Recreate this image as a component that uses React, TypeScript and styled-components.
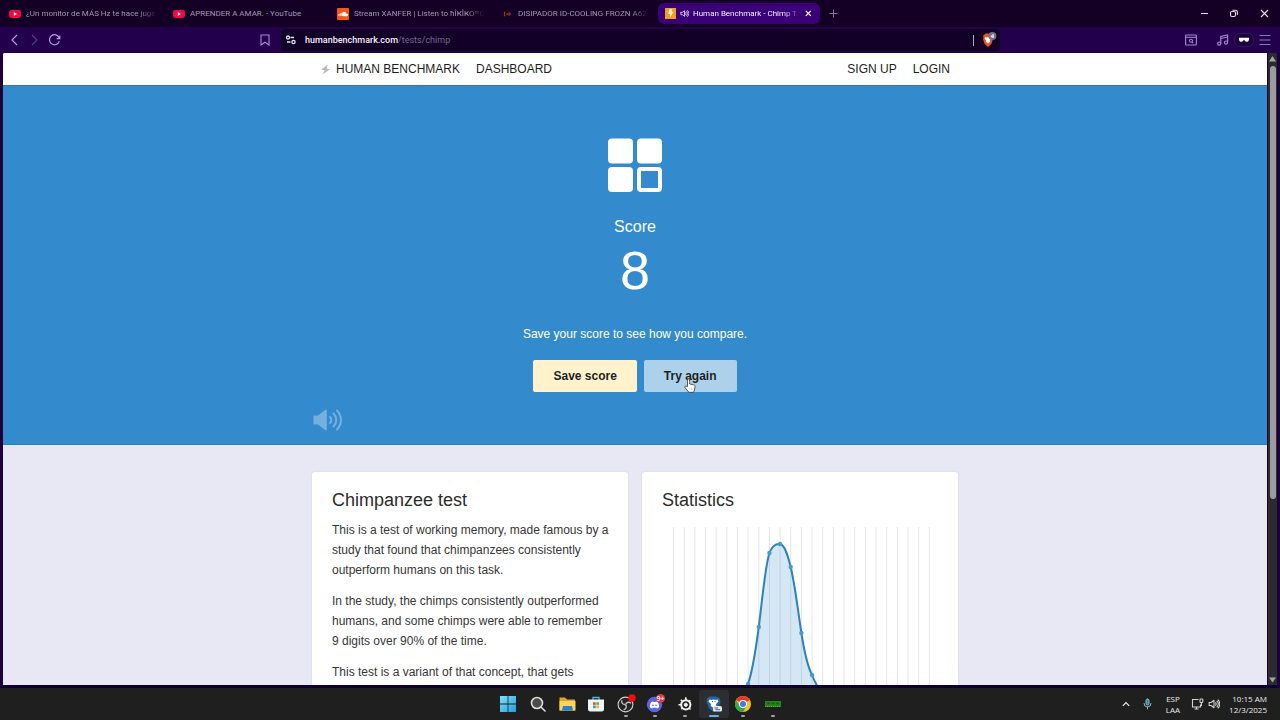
import React from "react";
import styled, { createGlobalStyle } from "styled-components";
import { FaSoundcloud, FaDiscord } from "react-icons/fa";

const GlobalStyle = createGlobalStyle`
  *, *::before, *::after { box-sizing: border-box; }
  body { margin: 0; background: #14002a; font-family: "Liberation Sans", Arial, sans-serif; }
  button, input { font: inherit; }
  svg { display: block; flex: none; }
`;

const uiFont = `"Open Sans", "Noto Sans", sans-serif`;
const chromeFont = `Roboto, "Noto Sans", sans-serif`;

const Desktop = styled.div`
  display: flex;
  flex-direction: column;
  height: 100vh;
  overflow: hidden;
`;

/* Browser chrome */

const TabStrip = styled.header`
  display: flex;
  align-items: center;
  height: 27px;
  padding: 0 10px 0 2px;
  background: #150025;
  font-family: ${chromeFont};
`;

const TabList = styled.nav`
  display: flex;
  gap: 2px;
  min-width: 0;
`;

const Tab = styled.a<{ $active?: boolean }>`
  display: flex;
  align-items: center;
  gap: ${(p) => (p.$active ? "4px" : "5px")};
  flex: 0 1 162px;
  width: 162px;
  min-width: 0;
  height: 21px;
  padding: 0 7px;
  border-radius: 6px;
  font-size: 8px;
  text-decoration: none;
  color: ${(p) => (p.$active ? "#f3ecff" : "#a395b4")};
  background: ${(p) => (p.$active ? "#3a0078" : "transparent")};
`;

const TabTitle = styled.span<{ $fade?: boolean }>`
  flex: 1;
  min-width: 0;
  overflow: hidden;
  line-height: 12px;
  white-space: nowrap;
  mask-image: ${(p) =>
    p.$fade ? "linear-gradient(to right, #000 calc(100% - 18px), transparent)" : "none"};
`;

const IconButton = styled.button`
  display: flex;
  align-items: center;
  justify-content: center;
  padding: 0;
  border: 0;
  background: none;
  color: inherit;
`;

const NewTab = styled(IconButton)`
  margin-left: 9px;
  color: #84759a;
`;

const WindowButtons = styled.div`
  display: flex;
  gap: 20px;
  margin-left: auto;
  color: #e3dcea;
`;

const Toolbar = styled.div`
  display: flex;
  align-items: center;
  height: 26px;
  padding: 0 9px;
  background: #22004b;
  color: #b69be0;
`;

const NavButtons = styled.div`
  display: flex;
  gap: 8px;
  flex: 1 1 251px;
`;

const BookmarkSlot = styled.div`
  width: 21px;
`;

const AddressBar = styled.div`
  display: flex;
  align-items: center;
  flex: 1 1 719px;
  max-width: 719px;
  height: 22px;
  padding: 0 3px 0 4px;
  border-radius: 4px;
  background: #120026;
  color: #e8def5;
`;

const Url = styled.a`
  flex: 1;
  margin-left: 8px;
  font-family: ${chromeFont};
  font-size: 9px;
  font-weight: 500;
  color: #f3ecfb;
  text-decoration: none;

  span { font-weight: 400; color: #786890; }
`;

const Divider = styled.span`
  width: 1px;
  height: 11px;
  margin-right: 7px;
  background: #b0a6bc;
`;

const ToolbarEnd = styled.div`
  display: flex;
  align-items: center;
  justify-content: flex-end;
  flex: 1 1 271px;
  gap: 5px;
`;

const PrivateBadge = styled.span`
  display: flex;
  align-items: center;
  justify-content: center;
  width: 20px;
  height: 14px;
  border: 1px solid #321660;
  border-radius: 6px;
  background: #1c0040;
  color: #ffffff;
`;

const PageGap = styled.div`
  margin-right: 15px;
`;

/* Web page */

const Viewport = styled.div`
  display: flex;
  flex: 1;
  min-height: 0;
  padding: 0 3px;
  border-bottom: 3px solid #0d0030;
  background: #1b003a;
`;

const Page = styled.div`
  flex: 1;
  min-width: 0;
  overflow: hidden;
  border-radius: 2px 0 0 0;
  background: #e7e8f4;
`;

const Container = styled.div`
  width: 100%;
  max-width: 646px;
  margin: 0 auto;
`;

const SiteNav = styled.nav`
  display: flex;
  align-items: center;
  height: 32px;
  background: #ffffff;
`;

const NavRow = styled(Container)`
  display: flex;
  align-items: center;
  gap: 16px;
  padding: 0 8px;

  a {
    display: flex;
    align-items: center;
    gap: 5px;
    font-size: 12px;
    color: #1e1e1e;
    text-decoration: none;
  }
  a:nth-child(3) { margin-left: auto; }
`;

const Hero = styled.section`
  border-top: 1px solid #2d79b0;
  border-bottom: 1px solid #2f7fb9;
  background: #338bce;
  color: #ffffff;
`;

const HeroInner = styled(Container)`
  display: flex;
  flex-direction: column;
  align-items: center;
  height: 358px;
  padding-top: 52px;
  text-align: center;
`;

const Label = styled.h2`
  margin: 25px 0 0;
  font-size: 16px;
  line-height: 20px;
  font-weight: 400;
`;

const Score = styled.h1`
  margin: 3px 0 0;
  font-size: 54px;
  line-height: 60px;
  font-weight: 400;
`;

const Hint = styled.p`
  margin: 24px 0 0;
  font-size: 12px;
  line-height: 20px;
`;

const Actions = styled.div`
  display: flex;
  gap: 7px;
  margin-top: 16px;
`;

const ActionButton = styled.button<{ $tone: string }>`
  position: relative;
  height: 32px;
  padding: 0 20px;
  border: 0;
  border-radius: 2px;
  background: ${(p) => p.$tone};
  color: #1f1f1f;
  font-size: 12px;
  font-weight: 700;
`;

const Pointer = styled.svg`
  position: absolute;
  left: 40px;
  top: 18px;
`;

const SoundButton = styled(IconButton)`
  align-self: flex-start;
  margin-top: 16px;
  color: #75b0de;
`;

const Cards = styled(Container)`
  display: grid;
  grid-template-columns: 1fr 1fr;
  gap: 14px;
  padding-top: 27px;
`;

const Card = styled.article`
  padding: 16px 18px 16px 20px;
  border-radius: 3px;
  background: #ffffff;
  box-shadow: 0 0 2px rgba(90, 90, 140, 0.18);

  h2 {
    margin: 0 0 8px;
    font-size: 18px;
    line-height: 24px;
    font-weight: 400;
    color: #2c2c2c;
  }
  p {
    margin: 0 0 11px;
    font-size: 12px;
    line-height: 20px;
    color: #363636;
  }
`;

const ScrollTrack = styled.div`
  display: flex;
  flex-direction: column;
  align-items: center;
  width: 9px;
  margin-left: 1px;
  padding: 3px 0 2px;
  background: #2b2a2c;
`;

const ScrollThumb = styled.div`
  flex: 0 0 69%;
  width: 6px;
  margin: 4px 0 auto;
  border-radius: 3px;
  background: #9c9a9c;
`;

/* Taskbar */

const Taskbar = styled.footer`
  display: grid;
  grid-template-columns: 1fr auto 1fr;
  align-items: center;
  height: 32px;
  padding: 0 13px 0 14px;
  background: #1f1f20;
  color: #ececec;
  font-family: ${uiFont};
  font-size: 8px;
`;

const AppList = styled.div`
  display: flex;
  grid-column: 2;
  width: 294px;
`;

const AppButton = styled(IconButton)<{ $running?: boolean; $active?: boolean }>`
  position: relative;
  flex: 1;
  height: 28px;
  border-radius: 3px;
  background: ${(p) => (p.$active ? "#2d2e31" : "transparent")};

  &::after {
    content: "";
    position: absolute;
    bottom: 1px;
    width: ${(p) => (p.$active ? "10px" : p.$running ? "4px" : "0")};
    height: 2px;
    border-radius: 1px;
    background: ${(p) => (p.$active ? "#5db2ee" : "#a2a2a2")};
  }
`;

const Tray = styled.div`
  display: flex;
  align-items: center;
  justify-content: flex-end;
  gap: 4px;
`;

const TrayText = styled.div<{ $right?: boolean }>`
  line-height: 11px;
  text-align: ${(p) => (p.$right ? "right" : "center")};
  margin: ${(p) => (p.$right ? "0 0 0 5px" : "0 7px 0 10px")};
`;

const TrayGap = styled.div`
  margin-right: 9px;
`;

const YouTubeIcon = () => (
  <svg width="12" height="12" viewBox="0 0 12 12">
    <rect x="0" y="2" width="12" height="8" rx="2.4" fill="#ed0a45" />
    <path d="M4.8 4.2v3.6L8 6z" fill="#fff" />
  </svg>
);

const SoundcloudIcon = () => (
  <svg width="12" height="12" viewBox="0 0 12 12">
    <rect width="12" height="12" rx="1" fill="#f0561d" />
    <FaSoundcloud x="1" y="1" size={10} color="#fff" />
  </svg>
);

const StoreIcon = () => (
  <svg width="12" height="12" viewBox="0 0 12 12">
    <path d="M3.6 3.8v4.4M5.6 6h2M7.8 4.4L9.3 6 7.8 7.6" fill="none" stroke="#a82c1c" strokeWidth="1.3" />
  </svg>
);

const BenchIcon = () => (
  <svg width="11" height="11" viewBox="0 0 11 11">
    <rect width="11" height="11" fill="#f0a125" />
    <path d="M4.4 1h2.8l-.5 2.8h1.7L4.9 10l.4-4H3.2z" fill="#fff3d2" />
  </svg>
);

const Speaker = ({ size, color = "currentColor" }: { size: number; color?: string }) => (
  <svg width={size} height={size} viewBox="0 0 16 16" fill="none" stroke={color} strokeWidth="1.4" strokeLinecap="round" strokeLinejoin="round">
    <path d="M1.5 6v4h2.6L8 13V3L4.1 6zM10.2 6.2a3 3 0 0 1 0 3.6M12 4.2a5.6 5.6 0 0 1 0 7.6M13.6 2.6a8 8 0 0 1 0 10.8" />
  </svg>
);

const BraveIcon = () => (
  <svg width="16" height="16" viewBox="0 0 16 16">
    <path d="M3 3l1.5-1.4h5L11 3l1 .8-.5 2.2.4 1.5-1.6 4.6L7 15l-3.3-2.9L2.1 7.5l.4-1.5L2 3.8z" fill="#ed5027" />
    <path d="M4 5l2 .6 1-.5 1 .5 2-.6.4 1.5-1.7 2.1.3 1.5L7 11.5 5 10.1l.3-1.5-1.7-2.1z" fill="#fff" />
    <circle cx="11.4" cy="4" r="4" fill="#77718a" />
    <path d="M12.1 6V2.3L10 4.8h2.9" fill="none" stroke="#fff" strokeWidth=".9" />
  </svg>
);

const xs = Array.from({ length: 25 }, (_, i) => 11.5 + i * 10.66);
const points = [
  [86, 164], [96.8, 107], [107.4, 33], [118, 24], [128.7, 47], [139.4, 113], [150, 155],
];
const curve =
  "M75 178C80 178 83 172 86 164C91 150 94 128 96.8 107C100 82 103 47 107.4 33C110 26 113 23.5 118 24C123 25 126 36 128.7 47C133 65 136 91 139.4 113C142 130 146 147 150 155C154 165 159 174 166 178";

const DistributionChart = () => (
  <svg width="100%" viewBox="0 0 278 200" role="img" aria-label="Score distribution">
    <g stroke="#e6e6e8" strokeWidth="1">
      {xs.map((x) => <path key={x} d={`M${x} 7V180`} />)}
    </g>
    <path d={`${curve}V180H75z`} fill="#2b87c8" fillOpacity=".2" />
    <path d={curve} fill="none" stroke="#2b83bd" strokeWidth="2" />
    {points.map(([x, y]) => <circle key={x} cx={x} cy={y} r="2.2" fill="#4a9ad0" />)}
  </svg>
);

const tabs = [
  { icon: <YouTubeIcon />, title: "¿Un monitor de MÁS Hz te hace juge", fade: true },
  { icon: <YouTubeIcon />, title: "APRENDER A AMAR. - YouTube" },
  { icon: <SoundcloudIcon />, title: "Stream XANFER | Listen to ħÎҜÎҜOᵐO", fade: true },
  { icon: <StoreIcon />, title: "DISIPADOR ID-COOLING FROZN A62", fade: true },
];

const apps = [
  {
    name: "Start",
    icon: (
      <svg width="16" height="16" viewBox="0 0 16 16">
        <defs>
          <linearGradient id="win" x1="0" y1="0" x2="1" y2="1">
            <stop stopColor="#7fe0fb" /><stop offset="1" stopColor="#229ee0" />
          </linearGradient>
        </defs>
        <path d="M0 0h7.6v7.6H0zM8.4 0H16v7.6H8.4zM0 8.4h7.6V16H0zM8.4 8.4H16V16H8.4z" fill="url(#win)" />
      </svg>
    ),
  },
  {
    name: "Search",
    icon: (
      <svg width="16" height="16" viewBox="0 0 16 16" fill="#4a4b4d" stroke="#dedede" strokeWidth="1.6" strokeLinecap="round">
        <circle cx="7" cy="7" r="5.5" /><path d="M11.2 11.2L15 15" />
      </svg>
    ),
  },
  {
    name: "File Explorer",
    icon: (
      <svg width="17" height="16" viewBox="0 0 17 16">
        <path d="M.5 1.5h5.5l2 2h8v11H.5z" fill="#e3a32b" />
        <path d="M.5 5h16v9.5H.5z" fill="#fbd45b" />
        <path d="M4 10h9l1 4.5H3z" fill="#2483cf" />
      </svg>
    ),
  },
  {
    name: "Store",
    icon: (
      <svg width="16" height="16" viewBox="0 0 16 16">
        <path d="M5 4V1.5h6V4" fill="none" stroke="#3fb5ea" strokeWidth="1.3" />
        <path d="M0 3.5h16V13a2.5 2.5 0 0 1-2.5 2.5h-11A2.5 2.5 0 0 1 0 13z" fill="#eef3f6" />
        <path d="M5 6.2h2.7v2.7H5z" fill="#e5532d" /><path d="M8.3 6.2H11v2.7H8.3z" fill="#72ae2c" />
        <path d="M5 9.5h2.7v2.7H5z" fill="#2e9be2" /><path d="M8.3 9.5H11v2.7H8.3z" fill="#f3b526" />
      </svg>
    ),
  },
  {
    name: "OBS Studio",
    running: true,
    icon: (
      <svg width="20" height="20" viewBox="0 0 20 20">
        <circle cx="9.5" cy="10.5" r="7.4" fill="#242325" stroke="#d1d1d1" strokeWidth="1.1" />
        <g fill="none" stroke="#bdbdbd" strokeWidth="1.4">
          <path d="M9.5 10.5c-3 .2-4.3-1.8-3.7-4.2" />
          <path d="M9.5 10.5c1.3-2.7 3.7-2.9 5.5-1.3" />
          <path d="M9.5 10.5c1.7 2.5.6 4.6-1.8 5.3" />
        </g>
        <circle cx="16" cy="4" r="3.8" fill="#f40b0b" />
      </svg>
    ),
  },
  {
    name: "Discord",
    running: true,
    icon: (
      <svg width="20" height="20" viewBox="0 0 20 20">
        <circle cx="9.5" cy="10.5" r="7.7" fill="#5b65e5" />
        <FaDiscord x="4.5" y="6" size={10} color="#fff" />
        <circle cx="15.6" cy="4.4" r="4.4" fill="#d83d4d" />
        <text x="15.6" y="6.9" fontSize="7" fontWeight="600" textAnchor="middle" fill="#fff">9+</text>
      </svg>
    ),
  },
  {
    name: "SteelSeries GG",
    running: true,
    icon: (
      <svg width="16" height="16" viewBox="0 0 16 16" fill="none" stroke="#f2f2f2">
        <circle cx="8.8" cy="8.8" r="4.6" strokeWidth="2" />
        <circle cx="8.8" cy="8.8" r="1.6" fill="#f2f2f2" />
        <path d="M8.8 4V1.2M4.5 8.8H1.5" strokeWidth="1.6" />
        <path d="M5.3 5.3L3.8 3.8M12.3 5.3l1-1M5.3 12.3l-1 1M12.3 12.3l1.2 1.2" strokeWidth="1.5" />
      </svg>
    ),
  },
  {
    name: "Brave",
    running: true,
    active: true,
    icon: (
      <svg width="16" height="16" viewBox="0 0 16 16">
        <path d="M1 2.5L3.5.5h7L14 2.5l.5 4-3 7-4 2.5-4.5-3.5L.5 5.5z" fill="#2465a1" />
        <path d="M3.5 3.5l2.5.4 1.5-.6 1.5.6 2.5-.4 1 2-2.5 2.5.3 2-2.8 2-2.8-2 .3-2L2.5 5.5z" fill="#fff" />
        <path d="M6 5.5h1M8.5 5.5h1" stroke="#2465a1" />
        <rect x="7" y="10" width="9" height="5.5" rx="1.5" fill="#dfe7ef" />
        <path d="M8.5 12h3.5M9.5 13.7h4.5" stroke="#3a566e" strokeWidth=".9" />
      </svg>
    ),
  },
  {
    name: "Chrome",
    running: true,
    icon: (
      <svg width="16" height="16" viewBox="0 0 16 16">
        <circle cx="8" cy="8" r="8" fill="#fbc116" />
        <path d="M8 8L1.1 4A8 8 0 0 1 14.9 4z" fill="#e33b2e" />
        <path d="M8 8L4.5 10 1.1 4A8 8 0 0 0 8 16l3.5-6z" fill="#2da94f" />
        <circle cx="8" cy="8" r="4" fill="#fff" /><circle cx="8" cy="8" r="3" fill="#3b7de9" />
      </svg>
    ),
  },
  {
    name: "Memory monitor",
    running: true,
    icon: (
      <svg width="16" height="16" viewBox="0 0 16 16">
        <rect x="0" y="5" width="16" height="6" fill="#25851d" />
        <path d="M0 10.5h16" stroke="#67a94c" strokeDasharray="1 1" />
        <path d="M2 7.5h3M6.5 7.5h3M11 7.5h3" stroke="#1a5a12" strokeWidth="1.5" />
      </svg>
    ),
  },
];

export default function App() {
  return (
    <Desktop>
      <GlobalStyle />
      <TabStrip>
        <TabList>
          {tabs.map((t) => (
            <Tab href="#" key={t.title}>
              {t.icon}
              <TabTitle $fade={t.fade}>{t.title}</TabTitle>
            </Tab>
          ))}
          <Tab href="#" $active>
            <BenchIcon />
            <Speaker size={9} />
            <TabTitle $fade>Human Benchmark - Chimp T</TabTitle>
            <svg width="8" height="7" viewBox="0 0 8 7" stroke="#fff" strokeWidth="1.2"><path d="M.8.8l5 5M5.8.8l-5 5" /></svg>
          </Tab>
        </TabList>
        <NewTab aria-label="New tab">
          <svg width="9" height="9" viewBox="0 0 9 9" stroke="currentColor"><path d="M4.5.5v8M.5 4.5h8" /></svg>
        </NewTab>
        <WindowButtons>
          <IconButton aria-label="Minimize">
            <svg width="9" height="9" viewBox="0 0 9 9" stroke="currentColor"><path d="M1 4.5h7" /></svg>
          </IconButton>
          <IconButton aria-label="Restore">
            <svg width="10" height="9" viewBox="0 0 10 9" fill="none" stroke="currentColor" strokeWidth="1.1">
              <rect x="1.5" y="2.5" width="5" height="5" rx="1.5" /><path d="M3.5 1.2h3A1.8 1.8 0 0 1 8.3 3v3" />
            </svg>
          </IconButton>
          <IconButton aria-label="Close">
            <svg width="11" height="9" viewBox="0 0 11 9" stroke="currentColor" strokeWidth="1.1"><path d="M2 1l7 7M9 1L2 8" /></svg>
          </IconButton>
        </WindowButtons>
      </TabStrip>

      <Toolbar>
        <NavButtons>
          <IconButton aria-label="Back">
            <svg width="12" height="12" viewBox="0 0 12 12" fill="none" stroke="#b69be0" strokeWidth="1.2"><path d="M8 1L3 6l5 5" /></svg>
          </IconButton>
          <IconButton aria-label="Forward">
            <svg width="12" height="12" viewBox="0 0 12 12" fill="none" stroke="#553a80" strokeWidth="1.2"><path d="M3 1l5 5-5 5" /></svg>
          </IconButton>
          <IconButton aria-label="Reload">
            <svg width="12" height="12" viewBox="0 0 12 12" fill="none" stroke="#b69be0" strokeWidth="1.2"><path d="M10.3 7.2A5 5 0 1 1 10.2 4M10.8 1.5V4.6H7.6" /></svg>
          </IconButton>
        </NavButtons>
        <BookmarkSlot>
          <IconButton aria-label="Bookmark">
            <svg width="10" height="12" viewBox="0 0 10 12" fill="none" stroke="#a68cd0" strokeWidth="1.1"><path d="M1 1h8v10L5 8.2 1 11z" /></svg>
          </IconButton>
        </BookmarkSlot>
        <AddressBar>
          <svg width="12" height="10" viewBox="0 0 12 10" fill="none" stroke="currentColor" strokeWidth="1.3">
            <circle cx="3" cy="2.5" r="1.5" /><path d="M5.5 2.5h3.5M2 7h3.5" /><circle cx="8.5" cy="7" r="1.6" />
          </svg>
          <Url href="#">humanbenchmark.com<span>/tests/chimp</span></Url>
          <Divider />
          <BraveIcon />
        </AddressBar>
        <ToolbarEnd>
          <PageGap>
            <svg width="12" height="12" viewBox="0 0 12 12" fill="none" stroke="#a085d0" strokeWidth="1.1">
              <rect x=".6" y="1" width="10.8" height="10" rx=".8" /><path d="M.6 3.3h10.8" /><circle cx="6" cy="6.8" r="1.5" /><path d="M7 8l1 1" />
            </svg>
          </PageGap>
          <svg width="12" height="12" viewBox="0 0 12 12" fill="none" stroke="#a085d0" strokeWidth="1.2">
            <circle cx="2.2" cy="9.6" r="1.6" /><circle cx="9" cy="8.6" r="1.6" /><path d="M3.8 9.6V2.5L10.6 1v7.6M3.8 4.5L10.6 3" />
          </svg>
          <PrivateBadge>
            <svg width="10" height="6" viewBox="0 0 10 6" fill="currentColor"><path d="M0 .8h10v1.4c0 1.5-.8 2.6-2.3 2.6S5.5 3.6 5 2.6C4.5 3.6 3.8 4.8 2.3 4.8S0 3.7 0 2.2z" /></svg>
          </PrivateBadge>
          <IconButton aria-label="Menu">
            <svg width="12" height="12" viewBox="0 0 12 12" stroke="#8d74c0" strokeWidth="1.2"><path d="M.5 1.5h11M.5 6h11M.5 10.5h11" /></svg>
          </IconButton>
        </ToolbarEnd>
      </Toolbar>

      <Viewport>
        <Page>
          <SiteNav>
            <NavRow>
              <a href="#">
                <svg width="11" height="11" viewBox="0 0 11 11" fill="#b9b9b9"><path d="M8 .5L1 5.6l3.6.6L2.5 10.5 10 5.2l-3.6-.7z" /></svg>
                HUMAN BENCHMARK
              </a>
              <a href="#">DASHBOARD</a>
              <a href="#">SIGN UP</a>
              <a href="#">LOGIN</a>
            </NavRow>
          </SiteNav>
          <Hero>
            <HeroInner>
              <svg width="54" height="54" viewBox="0 0 54 54" fill="#fff">
                <rect y=".5" width="25" height="25" rx="4" />
                <rect x="29" y=".5" width="25" height="25" rx="4" />
                <rect y="29" width="25" height="25" rx="4" />
                <rect x="31" y="31" width="21" height="21" rx="2" fill="none" stroke="#fff" strokeWidth="4" />
              </svg>
              <Label>Score</Label>
              <Score>8</Score>
              <Hint>Save your score to see how you compare.</Hint>
              <Actions>
                <ActionButton $tone="#fff2cc">Save score</ActionButton>
                <ActionButton $tone="#aed1eb">
                  Try again
                  <Pointer width="12" height="15" viewBox="0 0 12 15">
                    <path d="M3.5 8.5V2a1.1 1.1 0 0 1 2.2 0v4l4 .8c1 .2 1.4.8 1.3 1.7l-.5 3.5-1 2.3H4.9L1 9.6c-.6-1 .3-1.8 1.2-1.3z" fill="#fff" stroke="#333" strokeWidth=".8" />
                    <path d="M5.8 9.5v2.5M7.5 9.5v2.5M9 9.5v2.5" stroke="#aaa" strokeWidth=".5" />
                  </Pointer>
                </ActionButton>
              </Actions>
              <SoundButton aria-label="Sound">
                <svg width="32" height="24" viewBox="0 0 32 24">
                  <path d="M1.5 7.5H6L13 2q1.8-1 1.8.8v18.4q0 1.8-1.8.8L6 16.5H1.5z" fill="currentColor" />
                  <g fill="none" stroke="currentColor" strokeWidth="2" strokeLinecap="round">
                    <path d="M18 9a4 4 0 0 1 0 6M21.5 5.5a9 9 0 0 1 0 13M25 2.5a13.5 13.5 0 0 1 0 19" />
                  </g>
                </svg>
              </SoundButton>
            </HeroInner>
          </Hero>
          <Cards>
            <Card>
              <h2>Chimpanzee test</h2>
              <p>This is a test of working memory, made famous by a study that found that chimpanzees consistently outperform humans on this task.</p>
              <p>In the study, the chimps consistently outperformed humans, and some chimps were able to remember 9 digits over 90% of the time.</p>
              <p>This test is a variant of that concept, that gets</p>
            </Card>
            <Card>
              <h2>Statistics</h2>
              <DistributionChart />
            </Card>
          </Cards>
        </Page>
        <ScrollTrack>
          <svg width="7" height="6" viewBox="0 0 7 6" fill="#a5a3a5"><path d="M3.5 0L7 5.5H0z" /></svg>
          <ScrollThumb />
          <svg width="7" height="6" viewBox="0 0 7 6" fill="#a5a3a5"><path d="M0 .5h7L3.5 5.5z" /></svg>
        </ScrollTrack>
      </Viewport>

      <Taskbar>
        <AppList>
          {apps.map((a) => (
            <AppButton key={a.name} aria-label={a.name} $running={a.running} $active={a.active}>
              {a.icon}
            </AppButton>
          ))}
        </AppList>
        <Tray>
          <TrayGap>
            <svg width="8" height="6" viewBox="0 0 8 6" fill="none" stroke="currentColor" strokeWidth="1.2"><path d="M.8 4.8L4 1.5l3.2 3.3" /></svg>
          </TrayGap>
          <svg width="9" height="12" viewBox="0 0 9 12" fill="none" stroke="#8fb9c6" strokeLinecap="round">
            <rect x="3" y="1" width="3" height="6" rx="1.5" fill="#3b7f99" /><path d="M1 5.5a3.5 3.5 0 0 0 7 0M4.5 9v2" />
          </svg>
          <TrayText>ESP<br />LAA</TrayText>
          <svg width="13" height="12" viewBox="0 0 13 12" fill="none" stroke="#d6d6d6" strokeWidth="1.1">
            <path d="M7.5 1.5H1.5v7.5h8V6.5M3.5 11h4M5.5 9v2" /><rect x="9" y="1" width="2.8" height="3.5" rx=".8" /><path d="M10.4 4.5V8" />
          </svg>
          <Speaker size={12} color="#d6d6d6" />
          <TrayText $right>10:15 AM<br />12/3/2025</TrayText>
        </Tray>
      </Taskbar>
    </Desktop>
  );
}
